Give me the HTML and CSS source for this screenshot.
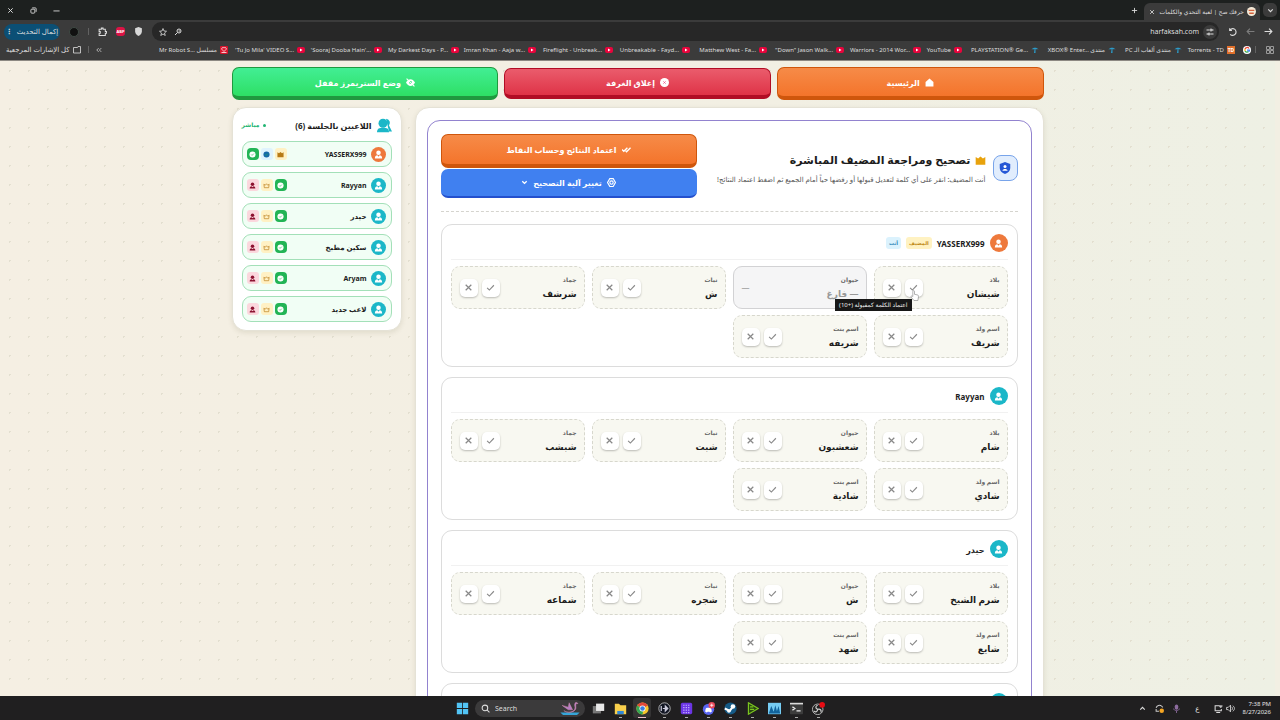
FILE: index.html
```html
<!DOCTYPE html>
<html lang="ar" dir="rtl">
<head>
    <meta charset="UTF-8">
    <meta name="viewport" content="width=device-width, initial-scale=1.0">
    <title>حرفك صح | لعبة التحدي والكلمات</title>
    <link rel="stylesheet" href="styles.css">
</head>
<body>

    <svg class="sprite" aria-hidden="true">
        <symbol id="i-check" viewBox="0 0 16 16"><path d="M2 8.500l4 4L14 4" fill="none" stroke="currentColor" stroke-width="2"/></symbol>
        <symbol id="i-x" viewBox="0 0 16 16"><path d="M3 3l10 10M13 3L3 13" fill="none" stroke="currentColor" stroke-width="2.200"/></symbol>
        <symbol id="i-user" viewBox="0 0 16 16"><circle cx="8" cy="5" r="4"/><path d="M1.500 15c0-4 2-5.500 4.500-5.500L8 12l2-2.500c2.500 0 4.500 1.500 4.500 5.500z"/></symbol>
        <symbol id="i-crown" viewBox="0 0 16 16"><path d="M1 3l3.500 2L8 2l3.500 3L15 3v11H1z"/></symbol>
        <symbol id="i-crown-line" viewBox="0 0 16 16"><path d="M2 5l3 2.500L8 4l3 3.500L14 5l-1 8H3z" fill="none" stroke="currentColor" stroke-width="1.500"/></symbol>
        <symbol id="i-dot" viewBox="0 0 16 16"><circle cx="8" cy="8" r="7"/><path d="M5 8l2 2 4-4" fill="none" stroke="#22b455" stroke-width="1.500"/></symbol>
        <symbol id="i-yt" viewBox="0 0 16 16"><rect x="0" y="2" width="16" height="12" rx="4" fill="#e8043c"/><path d="M6 5l5 3-5 3z" fill="#fff"/></symbol>
        <symbol id="i-palm" viewBox="0 0 16 16"><path d="M1 7c3-5 11-5 14 0-3-2-4-1-5 0-1-1-3-1-4 0-1-1-3-1-5 0zM7 7h2v7H6z" fill="#2c9bc9"/></symbol>
    </svg>

    <header class="browser">
        <div class="tabs">
            <button class="tab-list" aria-label="بحث"><svg viewBox="0 0 16 16"><path d="M4 6l4 4 4-4" fill="none" stroke="currentColor" stroke-width="2"/></svg></button>
            <div class="tab">
                <svg viewBox="0 0 16 16"><circle cx="8" cy="8" r="8" fill="#f4ead8"/><path d="M3 6h10M4 11h8" stroke="#d5623d" stroke-width="2.500"/></svg>
                <span>حرفك صح | لعبة التحدي والكلمات</span>
                <button aria-label="إغلاق التبويب"><svg><use href="#i-x"/></svg></button>
            </div>
            <button class="new-tab" aria-label="تبويب جديد"><svg viewBox="0 0 16 16"><path d="M8 2v12M2 8h12" stroke="currentColor" stroke-width="2"/></svg></button>
            <div class="window-buttons">
                <button aria-label="تصغير"><svg viewBox="0 0 16 16"><path d="M1 9h14" stroke="currentColor" stroke-width="2"/></svg></button>
                <button aria-label="استعادة"><svg viewBox="0 0 16 16"><rect x="2" y="5" width="9" height="9" rx="2" fill="none" stroke="currentColor" stroke-width="2"/><path d="M5 2h7a2 2 0 012 2v7" fill="none" stroke="currentColor" stroke-width="2"/></svg></button>
                <button aria-label="إغلاق"><svg><use href="#i-x"/></svg></button>
            </div>
        </div>

        <div class="toolbar">
            <button aria-label="رجوع"><svg viewBox="0 0 16 16"><path d="M1 8h13M9 3l5 5-5 5" fill="none" stroke="currentColor" stroke-width="2"/></svg></button>
            <button class="dim" aria-label="تقدم"><svg viewBox="0 0 16 16"><path d="M15 8H2M7 3L2 8l5 5" fill="none" stroke="currentColor" stroke-width="2"/></svg></button>
            <button aria-label="تحديث"><svg viewBox="0 0 16 16"><path d="M3 2v4h4M3 6a6 6 0 111 7" fill="none" stroke="currentColor" stroke-width="2"/></svg></button>
            <div class="address">
                <button class="tune" aria-label="معلومات الموقع"><svg viewBox="0 0 16 16"><path d="M1 4h6M1 12h4M9 12h6M11 4h4" stroke="currentColor" stroke-width="2"/><circle cx="10" cy="4" r="2" fill="none" stroke="currentColor" stroke-width="2"/><circle cx="6" cy="12" r="2" fill="none" stroke="currentColor" stroke-width="2"/></svg></button>
                <input type="text" value="harfaksah.com" aria-label="العنوان">
                <button aria-label="كلمات المرور"><svg viewBox="0 0 16 16"><circle cx="10" cy="6" r="4" fill="none" stroke="currentColor" stroke-width="2"/><path d="M7 9l-5 5M9 6h3" stroke="currentColor" stroke-width="2"/></svg></button>
                <button aria-label="إشارة مرجعية"><svg viewBox="0 0 16 16"><path d="M8 1l2 5 5 .5-4 3.500 1.500 5L8 12l-4.500 3L5 10 1 6.500 6 6z" fill="none" stroke="currentColor" stroke-width="1.600"/></svg></button>
            </div>
            <button aria-label="درع"><svg viewBox="0 0 16 16"><path d="M8 0l6 2v6c0 4-3 6-6 8-3-2-6-4-6-8V2z" fill="#d8d8d8"/></svg></button>
            <button class="abp">ABP</button>
            <button aria-label="الإضافات"><svg viewBox="0 0 16 16"><path d="M2 4h4V2h3v2h4v4h2v3h-2v4H2v-4h2V8H2z" fill="none" stroke="currentColor" stroke-width="1.800"/></svg></button>
            <i class="bar-line"></i>
            <button class="profile" aria-label="الملف الشخصي"></button>
            <button class="update">إكمال التحديث <b>⋮</b></button>
        </div>

        <nav class="bookmarks">
            <svg class="apps" viewBox="0 0 16 16"><path d="M1 1h6v6H1zM9 1h6v6H9zM1 9h6v6H1zM9 9h6v6H9z" fill="none" stroke="#999" stroke-width="2"/></svg>
            <i class="bar-line"></i>
            <a href="#" aria-label="Google"><svg viewBox="0 0 16 16"><circle cx="8" cy="8" r="8" fill="#fff"/><path d="M4 6a4.500 4.500 0 018-1" fill="none" stroke="#ea4335" stroke-width="2.500"/><path d="M4 6v4" stroke="#fbbc05" stroke-width="2.500"/><path d="M4 10a4.500 4.500 0 007 1" fill="none" stroke="#34a853" stroke-width="2.500"/><path d="M8 8h5c0 2-1 3-2 3.500" fill="none" stroke="#4285f4" stroke-width="2.500"/></svg></a>
            <a href="#" class="short"><b class="td">TD</b><span dir="ltr">Torrents - TD</span></a>
            <a href="#" class="forum"><svg><use href="#i-palm"/></svg><span>منتدى ألعاب الـ PC</span></a>
            <a href="#" class="long"><svg><use href="#i-palm"/></svg><span dir="ltr">XBOX® Enter... منتدى</span></a>
            <a href="#" class="long"><svg><use href="#i-palm"/></svg><span dir="ltr">PLAYSTATION® Ge...</span></a>
            <a href="#" class="yt"><svg><use href="#i-yt"/></svg><span dir="ltr">YouTube</span></a>
            <a href="#" class="long"><svg><use href="#i-yt"/></svg><span dir="ltr">Warriors - 2014 Wor...</span></a>
            <a href="#" class="long"><svg><use href="#i-yt"/></svg><span dir="ltr">"Down" Jason Walk...</span></a>
            <a href="#" class="long"><svg><use href="#i-yt"/></svg><span dir="ltr">Matthew West - Fa...</span></a>
            <a href="#" class="long"><svg><use href="#i-yt"/></svg><span dir="ltr">Unbreakable - Fayd...</span></a>
            <a href="#" class="long"><svg><use href="#i-yt"/></svg><span dir="ltr">Fireflight - Unbreak...</span></a>
            <a href="#" class="long"><svg><use href="#i-yt"/></svg><span dir="ltr">Imran Khan - Aaja w...</span></a>
            <a href="#" class="long"><svg><use href="#i-yt"/></svg><span dir="ltr">My Darkest Days - P...</span></a>
            <a href="#" class="long"><svg><use href="#i-yt"/></svg><span dir="ltr">'Sooraj Dooba Hain'...</span></a>
            <a href="#" class="long"><svg><use href="#i-yt"/></svg><span dir="ltr">'Tu Jo Mila' VIDEO S...</span></a>
            <a href="#" class="long"><svg viewBox="0 0 16 16"><rect width="16" height="16" rx="2" fill="#d8142c"/><path d="M8 11L4 7a2.500 2.500 0 014-3 2.500 2.500 0 014 3zM3 13h10" fill="none" stroke="#fff" stroke-width="1.500"/></svg><span dir="ltr">Mr Robot S... مسلسل</span></a>
            <div class="bookmarks-end">
                <button aria-label="المزيد"><svg viewBox="0 0 16 16"><path d="M7 3L2 8l5 5M14 3L9 8l5 5" fill="none" stroke="currentColor" stroke-width="2"/></svg></button>
                <i class="bar-line"></i>
                <a href="#"><svg viewBox="0 0 16 16"><path d="M1 3h8l1-2h5v13H1z" fill="none" stroke="currentColor" stroke-width="1.600"/></svg><span>كل الإشارات المرجعية</span></a>
            </div>
        </nav>
    </header>

    <div class="page">
        <div class="container">
            <div class="top-buttons">
                <button class="btn orange"><svg viewBox="0 0 16 16"><path d="M8 1l7 6v8H1V7z"/></svg>الرئيسية</button>
                <button class="btn red"><svg viewBox="0 0 16 16"><circle cx="8" cy="8" r="8"/><path d="M6 6l4 4M10 6l-4 4" stroke="#e58" stroke-width="1.500"/></svg>إغلاق الغرفة</button>
                <button class="btn green"><svg viewBox="0 0 16 16"><path d="M0 8c2-4 5-6 8-6s6 2 8 6c-2 4-5 6-8 6s-6-2-8-6z"/><circle cx="8" cy="8" r="2.500" fill="#33df78"/><path d="M1 1l14 14" stroke="#fff" stroke-width="2"/></svg>وضع الستريمرز مقفل</button>
            </div>

            <div class="columns">
                <main class="card">
                    <section class="review">
                        <div class="review-head">
                            <div class="review-title">
                                <span class="shield"><svg viewBox="0 0 16 16"><path d="M8 0l7 2.500V8c0 4-3 6.500-7 8-4-1.500-7-4-7-8V2.500z" fill="#2557d6"/><circle cx="8" cy="6" r="2" fill="#fff"/><path d="M4.500 11.500c.5-3 6.500-3 7 0z" fill="#fff"/></svg></span>
                                <div class="review-text">
                                    <h1><svg><use href="#i-crown"/></svg>تصحيح ومراجعة المضيف المباشرة</h1>
                                    <p>أنت المضيف: انقر على أي كلمة لتعديل قبولها أو رفضها حياً أمام الجميع ثم اضغط اعتماد النتائج!</p>
                                </div>
                            </div>
                            <div class="review-buttons">
                                <button class="btn orange"><svg viewBox="0 0 20 16"><path d="M0 8l4 4 8-8M8 11l2 2 9-9" fill="none" stroke="currentColor" stroke-width="3"/></svg>اعتماد النتائج وحساب النقاط</button>
                                <button class="btn blue"><svg viewBox="0 0 16 16"><path d="M5 1h6l4 7-4 7H5L1 8z" fill="none" stroke="currentColor" stroke-width="2"/><circle cx="8" cy="8" r="3" fill="none" stroke="currentColor" stroke-width="2"/></svg>تغيير آلية التصحيح<svg class="chevron" viewBox="0 0 16 16"><path d="M3 5l5 5 5-5" fill="none" stroke="currentColor" stroke-width="3"/></svg></button>
                            </div>
                        </div>
                        <div id="answers"></div>
                    </section>
                </main>

                <aside class="card players">
                    <div class="players-head">
                        <h2><svg viewBox="0 0 20 20"><path d="M12 1a5.500 5.500 0 014 9l4 8h-4z"/><circle cx="8" cy="7" r="6"/><path d="M0 19c0-5 3-6 8-6s8 1 8 6z"/></svg>اللاعبين بالجلسة (6)</h2>
                        <span class="live">مباشر</span>
                    </div>
                    <ul id="players"></ul>
                </aside>
            </div>
        </div>
    </div>

    <footer class="taskbar" dir="ltr">
        <div class="apps-row">
            <button aria-label="Start"><svg viewBox="0 0 16 16"><path d="M1 1h6.500v6.500H1zM8.500 1H15v6.500H8.500zM1 8.500h6.500V15H1zM8.500 8.500H15V15H8.500z" fill="#52c4f5"/></svg></button>
            <label class="search">
                <svg viewBox="0 0 16 16"><circle cx="7" cy="7" r="5" fill="none" stroke="#ddd" stroke-width="1.800"/><path d="M11 11l4 4" stroke="#ddd" stroke-width="2"/></svg>
                <input type="text" placeholder="Search" aria-label="Search">
                <svg class="bird" viewBox="0 0 24 16"><path d="M1 13h22l-3 3H4z" fill="#36a5d8"/><path d="M5 11c4 3 10 2 12-1 2-3-1-5 1-8 1-1 3 0 3 1l-2 0c-1 3 1 6-2 8-2 2-8 3-12 0zM10 10L3 5l7 2 1-5 4 8z" fill="#b77fc4" stroke="#d98db4" stroke-width=".5"/></svg>
            </label>
            <button aria-label="Task view"><svg viewBox="0 0 16 16"><rect x="1" y="5" width="10" height="9" fill="#777"/><rect x="5" y="2" width="10" height="9" fill="#e8e8e8"/></svg></button>
            <button class="open" aria-label="Explorer"><svg viewBox="0 0 16 16"><path d="M1 2h5l2 2h7v11H1z" fill="#f8cf4c"/><path d="M4 11h8v4H4z" fill="#2f87d8"/></svg></button>
            <button class="open active" aria-label="Chrome"><svg viewBox="0 0 16 16"><circle cx="8" cy="8" r="7.500" fill="#f6c52c"/><path d="M1.500 4.300A7.500 7.500 0 0114.500 4.300L8 8z" fill="#e2483a"/><path d="M1.500 4.300A7.500 7.500 0 008 15.500L9 9z" fill="#35a554"/><circle cx="8" cy="8" r="3.700" fill="#fff"/><circle cx="8" cy="8" r="2.800" fill="#3c7de0"/></svg></button>
            <button class="open" aria-label="Player"><svg viewBox="0 0 16 16"><circle cx="8" cy="8" r="7" fill="#111522" stroke="#ccc"/><path d="M4 5v6M6 8h4M12 8L9 5v6z" stroke="#ccd" stroke-width="1.500" fill="#ccd"/></svg></button>
            <button class="open" aria-label="Grid"><svg viewBox="0 0 16 16"><rect x="1" y="1" width="14" height="14" rx="2" fill="#6b35e5"/><path d="M4 4h9M4 7h9M4 10h9M4 13h9" stroke="#c9b8ff" stroke-width="1.500" stroke-dasharray="1.500 1.500"/></svg></button>
            <button class="open" aria-label="Discord"><svg viewBox="0 0 16 16"><circle cx="8" cy="9" r="7" fill="#5865f2"/><path d="M4 12c0-3 1-5 2-5h4c1 0 2 2 2 5l-2 1-1-1H7l-1 1z" fill="#fff"/><circle cx="12" cy="4" r="4" fill="#e8495a"/><path d="M10 4h4M12 2v4" stroke="#fff"/></svg></button>
            <button class="open" aria-label="Steam"><svg viewBox="0 0 16 16"><circle cx="8" cy="8" r="7.500" fill="#155a86"/><path d="M1 8l6 3 3-4" fill="none" stroke="#fff" stroke-width="2.500"/><circle cx="11" cy="5.500" r="2.800" fill="#fff"/><circle cx="6" cy="11" r="2.200" fill="#fff"/></svg></button>
            <button class="open" aria-label="Stream"><svg viewBox="0 0 16 16"><path d="M3 1l12 7-12 7z" fill="#274510" stroke="#7bc520" stroke-width="1.500"/><path d="M5 6h4M5 9h5" stroke="#7bc520" stroke-width="1.500"/></svg></button>
            <button class="open" aria-label="Monitor"><svg viewBox="0 0 16 16"><rect x="0" y="1" width="16" height="14" fill="#76cdf4"/><path d="M1 14l3-9 3 7 2-8 2 7 2-6 2 9z" fill="#12649d"/></svg></button>
            <button class="open" aria-label="Terminal"><svg viewBox="0 0 16 16"><rect x="0" y="1" width="16" height="14" rx="1" fill="#3c3c3c"/><path d="M0 2h16" stroke="#ddd" stroke-width="2"/><path d="M3 6l3 2-3 2M8 11h5" fill="none" stroke="#eee" stroke-width="1.500"/></svg></button>
            <button class="open" aria-label="OBS"><svg viewBox="0 0 16 16"><circle cx="7" cy="9" r="6.500" fill="#222" stroke="#ccc"/><path d="M7 9c-3-1-3-4 0-5M7 9c3-1 5 1 4 4M7 9c0 3-3 4-5 2" fill="none" stroke="#ccc" stroke-width="1.500"/><circle cx="12.500" cy="3.500" r="3.500" fill="#e80c14"/></svg></button>
        </div>
        <div class="tray">
            <svg viewBox="0 0 16 16"><path d="M4 10l4-4 4 4" fill="none" stroke="#ddd" stroke-width="2"/></svg>
            <svg viewBox="0 0 16 16"><path d="M2 7a6 6 0 0110-3l2 2M2 9v4h5" fill="none" stroke="#ccc" stroke-width="1.800"/><circle cx="12" cy="12" r="4" fill="#f5a623"/></svg>
            <svg viewBox="0 0 16 16"><rect x="5" y="1" width="6" height="9" rx="3" fill="#8d6c9f"/><path d="M3 8c0 5 10 5 10 0M8 12v4" fill="none" stroke="#8d6c9f" stroke-width="1.500"/></svg>
            <span class="lang">ع</span>
            <div class="status">
                <svg viewBox="0 0 16 16"><path d="M9 3H2v9h11V9M4 15h7" fill="none" stroke="#ddd" stroke-width="1.800"/><path d="M12 2v5M14 2v3h-4V2" fill="none" stroke="#ddd" stroke-width="1.500"/></svg>
                <svg viewBox="0 0 16 16"><path d="M1 6h3l4-4v12l-4-4H1z" fill="none" stroke="#ddd" stroke-width="1.500"/><path d="M10 5c2 2 2 4 0 6M12 3c4 3 4 7 0 10" fill="none" stroke="#ddd" stroke-width="1.500"/></svg>
            </div>
            <div class="clock">7:38 PM<br>8/27/2026</div>
        </div>
    </footer>

    <script>
        const categories = ['بلاد', 'حيوان', 'نبات', 'جماد', 'اسم ولد', 'اسم بنت'];
        const players = [
            { name: 'YASSERX999', host: true, words: ['شيشان', '', 'ش', 'شرشف', 'شريف', 'شريفه'] },
            { name: 'Rayyan', words: ['شام', 'شعشبون', 'شبت', 'شبشب', 'شادي', 'شادية'] },
            { name: 'حيدر', words: ['شرم الشيخ', 'ش', 'شجره', 'شماعه', 'شايع', 'شهد'] },
            { name: 'سكين مطبخ', words: [] },
            { name: 'Aryam' },
            { name: 'لاعب جديد' }
        ];

        function icon(name) {
            return `<svg><use href="#i-${name}"/></svg>`;
        }

        function avatar(player) {
            return `<span class="avatar ${player.host ? 'host' : ''}">${icon('user')}</span>`;
        }

        function wordCell(word, i, hovered) {
            const label = `<div class="word"><small>${categories[i]}</small><strong>${word || '— فارغ'}</strong></div>`;
            if (!word) {
                return `<div class="cell empty">${label}<span class="none">—</span></div>`;
            }
            const tip = hovered ? '<span class="tooltip">اعتماد الكلمة كمقبولة (+10)</span><svg class="pointer" viewBox="0 0 16 20"><path d="M5 11V2c0-2 3-2 3 0v5l5 1c2 0 2 2 2 4l-1 6H7l-5-6c-1-2 1-3 3-1z" fill="#fff" stroke="#777"/></svg>' : '';
            return `<div class="cell">${label}<div class="marks">
                <div class="mark-wrap"><button aria-label="قبول">${icon('check')}</button>${tip}</div>
                <button aria-label="رفض">${icon('x')}</button></div></div>`;
        }

        document.getElementById('answers').innerHTML = players.filter(p => p.words).map((p, n) => `
            <article class="answer-card">
                <h3>${avatar(p)}${p.name}${p.host ? '<span class="tag yellow">المضيف</span><span class="tag sky">أنت</span>' : ''}</h3>
                <div class="cells">${p.words.map((w, i) => wordCell(w, i, n === 0 && i === 0)).join('')}</div>
            </article>`).join('');

        document.getElementById('players').innerHTML = players.map(p => `
            <li>${avatar(p)}<b>${p.name}</b>
                ${p.host
                    ? `<span class="chip gold">${icon('crown')}</span><span class="chip info">${icon('dot')}</span><button class="chip ok" aria-label="نشط">${icon('dot')}</button>`
                    : `<button class="chip ok" aria-label="نشط">${icon('dot')}</button><button class="chip gold" aria-label="تعيين مضيف">${icon('crown-line')}</button><button class="chip kick" aria-label="طرد">${icon('user')}</button>`}
            </li>`).join('');
    </script>

</body>
</html>
```
FILE: styles.css
```css
* {
    box-sizing: border-box;
}
body {
    margin: 0;
    height: 100vh;
    display: flex;
    flex-direction: column;
    overflow: hidden;
    font-family: "Noto Sans", "DejaVu Sans", sans-serif;
    font-size: 8px;
    color: #1c1c1c;
    background-color: #f2efe3;
}
button, input {
    font: inherit;
    color: inherit;
    border: none;
    background: none;
    padding: 0;
    margin: 0;
}
button {
    display: flex;
    align-items: center;
    justify-content: center;
    cursor: pointer;
}
svg {
    width: 9px;
    height: 9px;
    fill: currentColor;
    flex: none;
}
a {
    color: inherit;
    text-decoration: none;
}
h1, h2, h3, p, ul {
    margin: 0;
    padding: 0;
}
.sprite {
    display: none;
}

/* browser */
.browser {
    flex: none;
    background-color: #3b3b3b;
    color: #dedede;
    font-size: 7px;
    line-height: 12px;
    border-bottom: 1px solid #8d8983;
}
.tabs {
    display: flex;
    align-items: center;
    height: 20px;
    padding: 0 3px 0 7px;
    background-color: #1d201f;
}
.tab-list {
    width: 14px;
    height: 14px;
    background-color: #3b3b3b;
    border-radius: 5px;
}
.tab {
    display: flex;
    align-items: center;
    align-self: flex-end;
    gap: 3px;
    width: 116px;
    height: 17px;
    margin-right: 3px;
    padding: 0 4px 0 5px;
    background-color: #3b3b3b;
    border-radius: 6px 6px 0 0;
    font-size: 6px;
}
.tab span {
    flex: 1;
    white-space: nowrap;
}
.tab button svg {
    width: 6px;
    height: 6px;
}
.new-tab {
    margin-right: 6px;
}
.new-tab svg, .window-buttons svg {
    width: 7px;
    height: 7px;
}
.window-buttons {
    display: flex;
    gap: 16px;
    margin-right: auto;
}
.toolbar {
    display: flex;
    align-items: center;
    gap: 9px;
    height: 23px;
    padding: 0 7px 0 4px;
}
.dim {
    opacity: 0.4;
}
.address {
    flex: 1;
    display: flex;
    align-items: center;
    gap: 7px;
    height: 19px;
    padding: 0 2px 0 7px;
    background-color: #272727;
    border-radius: 9px;
}
.address svg {
    width: 8px;
    height: 8px;
}
.address input {
    flex: 1;
    min-width: 0;
    outline: none;
    font-size: 7px;
}
.tune {
    width: 14px;
    height: 14px;
    margin-left: -3px;
    border-radius: 50%;
    background-color: #3b3b3b;
}
.abp {
    width: 9px;
    height: 9px;
    border-radius: 3px;
    background-color: #dc1345;
    color: #fff;
    font-size: 4px;
    font-weight: bold;
}
.bar-line {
    width: 1px;
    height: 7px;
    background-color: #626262;
}
.profile {
    width: 10px;
    height: 10px;
    border-radius: 50%;
    background-color: #111;
    border: 1px solid #3f4a44;
}
.update {
    gap: 4px;
    height: 16px;
    width: 56px;
    border-radius: 8px;
    background-color: #0b4f75;
    white-space: nowrap;
}
.bookmarks {
    display: flex;
    align-items: center;
    height: 17px;
    padding: 0 6px 4px 6px;
    font-size: 6px;
    white-space: nowrap;
}
.bookmarks a {
    display: flex;
    align-items: center;
    gap: 3px;
}
.bookmarks svg, .td {
    width: 8px;
    height: 8px;
}
.bookmarks > .bar-line {
    margin: 0 10px 0 4px;
}
.bookmarks a.long {
    width: 77px;
}
.bookmarks a.short {
    width: 53px;
    margin-right: 8px;
}
.bookmarks a.forum {
    width: 66px;
}
.bookmarks a.yt {
    width: 41px;
}
.td {
    background-color: #e0702b;
    color: #fff;
    font-size: 5px;
    line-height: 8px;
    text-align: center;
}
.bookmarks-end {
    display: flex;
    align-items: center;
    gap: 7px;
    margin-right: auto;
}
.bookmarks-end button svg {
    width: 6px;
    height: 6px;
}
.bookmarks-end a {
    font-size: 7px;
}

/* page */
.page {
    flex: 1;
    min-height: 0;
    overflow: hidden;
    padding-top: 6px;
    background-color: #f2efe3;
    background-image: radial-gradient(circle, #e3dfd0 1px, transparent 1px), linear-gradient(to right, #f5efe3, #f2efe3 60%, #eef0e4);
    background-size: 19px 19px, 100% 100%;
    border-right: 5px solid #f2efe3;
    position: relative;
}
.page::after {
    content: "";
    position: absolute;
    top: 6px;
    right: -4px;
    width: 3px;
    height: 342px;
    border-radius: 2px;
    background-color: #efae8d;
}
.container {
    max-width: 812px;
    margin: 0 auto;
}
.top-buttons {
    display: grid;
    grid-template-columns: repeat(3, 1fr);
    align-items: center;
    gap: 6px;
    margin-bottom: 7px;
}
.btn {
    gap: 5px;
    height: 33px;
    width: 100%;
    border-radius: 7px;
    color: #fff;
    font-size: 8px;
    font-weight: bold;
}
.orange {
    background: linear-gradient(#f68b48, #f4742b);
    border: 1px solid #cf560c;
    border-bottom-width: 4px;
}
.red {
    height: 31px;
    background: linear-gradient(#ea5c6c, #df3347);
    border: 1px solid #b10d25;
    border-bottom-width: 4px;
}
.green {
    background: linear-gradient(#42ee94, #2edf65);
    border: 1px solid #20993f;
    border-bottom-width: 4px;
}
.blue {
    background-color: #4080f0;
    border-bottom: 2px solid #2450cd;
}
.columns {
    display: flex;
    align-items: flex-start;
    gap: 13px;
}
.card {
    background-color: #fff;
    border: 1px solid #e5e2d6;
    border-radius: 14px;
    box-shadow: 0 2px 5px rgba(90, 80, 40, 0.12);
}
main {
    flex: 1;
    padding: 12px 11px;
}
.review {
    border: 1px solid #9283cf;
    border-radius: 13px;
    padding: 13px;
}
.review-head {
    display: flex;
    align-items: center;
    justify-content: space-between;
    gap: 7px;
    padding-bottom: 13px;
    margin-bottom: 12px;
    border-bottom: 1px dashed #d5d4ce;
}
.review-title {
    flex: 1;
    display: flex;
    align-items: center;
    gap: 7px;
    padding-top: 4px;
    white-space: nowrap;
}
.review-text {
    padding-top: 4px;
}
.shield {
    display: flex;
    align-items: center;
    justify-content: center;
    width: 25px;
    height: 26px;
    background-color: #e1edfd;
    border: 1px solid #78a4ea;
    border-radius: 8px;
}
.shield svg {
    width: 12px;
    height: 12px;
}
h1 {
    display: flex;
    align-items: center;
    gap: 4px;
    font-size: 11px;
    line-height: 20px;
}
h1 svg {
    width: 11px;
    height: 11px;
    color: #e8a20c;
}
.review-title p {
    font-size: 7px;
    line-height: 20px;
    color: #555;
}
.review-buttons {
    width: 256px;
}
.review-buttons .orange {
    height: 34px;
}
.review-buttons .blue {
    height: 29px;
    margin-top: 1px;
}
.review-buttons svg.chevron {
    width: 7px;
    height: 7px;
}
.answer-card {
    border: 1px solid #dcdcdc;
    border-radius: 11px;
    padding: 9px 9px 8px;
    margin-bottom: 10px;
}
h3 {
    display: flex;
    align-items: center;
    gap: 5px;
    height: 26px;
    padding-bottom: 7px;
    margin-bottom: 6px;
    border-bottom: 1px solid #f1f1f1;
    font-size: 8px;
}
.avatar {
    display: flex;
    align-items: center;
    justify-content: center;
    flex: none;
    width: 18px;
    height: 18px;
    border-radius: 50%;
    background-color: #1bb7c8;
    color: #fff;
}
.avatar.host {
    background-color: #ee793c;
}
.tag {
    padding: 0 3px;
    border-radius: 3px;
    font-size: 5px;
    line-height: 12px;
}
.yellow {
    background-color: #fff2c2;
    color: #c08a18;
}
.sky {
    background-color: #dbf2fd;
    color: #2a83b5;
}
.cells {
    display: grid;
    grid-template-columns: repeat(4, 1fr);
    gap: 6px 7px;
}
.cell {
    display: flex;
    align-items: center;
    justify-content: space-between;
    height: 43px;
    padding: 0 7px 0 8px;
    background-color: #f8f8f1;
    border: 1px dashed #d7d7cd;
    border-radius: 9px;
}
.cell.empty {
    background-color: #f5f5f6;
    border: 1px solid #d2d2d4;
    color: #999;
}
.word {
    display: flex;
    flex-direction: column;
}
.word small {
    font-size: 6px;
    line-height: 12px;
    font-weight: bold;
    color: #666;
}
.word strong {
    font-size: 9px;
    line-height: 16px;
}
.marks {
    display: flex;
    gap: 4px;
}
.marks button {
    width: 18px;
    height: 18px;
    background-color: #fff;
    border-radius: 5px;
    color: #888;
    box-shadow: 0 1px 2px rgba(0, 0, 0, 0.25);
}
.mark-wrap {
    position: relative;
}
.tooltip {
    position: absolute;
    z-index: 2;
    top: 20px;
    right: 11px;
    padding: 0 4px;
    background-color: #171717;
    color: #eee;
    font-size: 6px;
    line-height: 12px;
    white-space: nowrap;
}
.marks .pointer {
    position: absolute;
    z-index: 3;
    top: 11px;
    left: 5px;
    width: 9px;
    height: 12px;
}

/* players */
.players {
    width: 170px;
    padding: 8px 9px;
}
.players-head {
    display: flex;
    align-items: center;
    justify-content: space-between;
    height: 18px;
    margin-bottom: 7px;
}
h2 {
    display: flex;
    align-items: center;
    gap: 5px;
    font-size: 8px;
}
h2 svg {
    width: 15px;
    height: 15px;
    color: #1bb7c8;
}
.live {
    display: flex;
    align-items: center;
    gap: 3px;
    color: #22b573;
    font-size: 6px;
    font-weight: bold;
}
.live::before {
    content: "";
    width: 3px;
    height: 3px;
    border-radius: 50%;
    background-color: #22b573;
}
.players ul {
    display: flex;
    flex-direction: column;
    gap: 5px;
    list-style: none;
}
.players li {
    display: flex;
    align-items: center;
    gap: 2px;
    height: 26px;
    padding: 0 5px 0 4px;
    background-color: #f1fef5;
    border: 1px solid #a3e0b8;
    border-radius: 9px;
}
.players .avatar {
    width: 15px;
    height: 15px;
}
.players li b {
    flex: 1;
    margin-right: 2px;
    font-size: 7px;
}
.chip {
    display: flex;
    align-items: center;
    justify-content: center;
    width: 12px;
    height: 12px;
    border-radius: 3px;
}
.chip svg {
    width: 7px;
    height: 7px;
}
.gold {
    background-color: #fff1c4;
    color: #b77a15;
}
.info {
    background-color: #dff3fd;
    color: #1769a8;
}
.ok {
    background-color: #22b455;
    color: #fff;
    border-radius: 4px;
}
.kick {
    background-color: #fbd7dd;
    color: #8c1230;
}

/* taskbar */
.taskbar {
    flex: none;
    position: relative;
    display: flex;
    align-items: center;
    justify-content: center;
    height: 24px;
    background-color: #201f20;
    color: #e3e3e3;
    font-size: 7px;
}
.apps-row {
    display: flex;
    align-items: center;
    gap: 4px;
}
.apps-row button {
    position: relative;
    width: 18px;
    height: 20px;
    border-radius: 3px;
}
.apps-row button svg {
    width: 13px;
    height: 13px;
}
.apps-row .active {
    background-color: #343334;
}
.apps-row .open::after {
    content: "";
    position: absolute;
    bottom: 0;
    width: 3px;
    height: 1px;
    background-color: #aaa;
}
.apps-row .active::after {
    width: 8px;
    background-color: #eebfca;
}
.search {
    display: flex;
    align-items: center;
    gap: 5px;
    width: 110px;
    height: 17px;
    padding: 0 4px 0 6px;
    border-radius: 9px;
    background-color: #3b3a3b;
}
.search input {
    flex: 1;
    min-width: 0;
    outline: none;
}
.search input::placeholder {
    color: #ddd;
    opacity: 1;
}
.search .bird {
    width: 22px;
    height: 14px;
}
.tray {
    position: absolute;
    right: 9px;
    display: flex;
    align-items: center;
    gap: 8px;
}
.lang {
    margin: 0 6px;
}
.status {
    display: flex;
    gap: 3px;
}
.clock {
    font-size: 6px;
    line-height: 8px;
    text-align: right;
}
```
